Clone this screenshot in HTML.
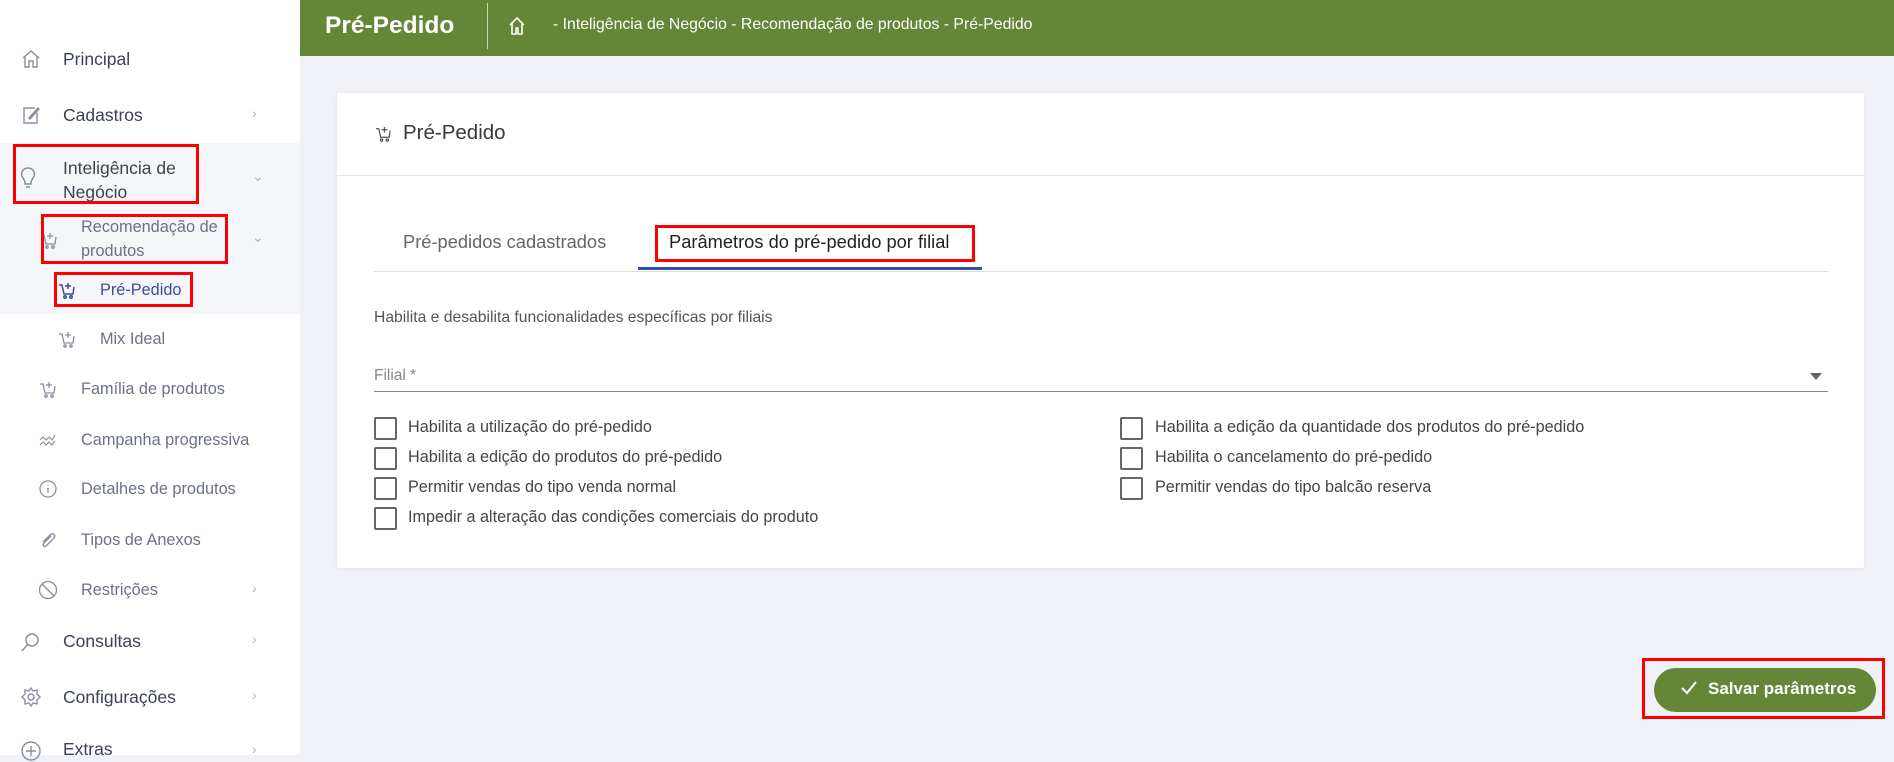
<!DOCTYPE html>
<html><head><meta charset="utf-8"><style>
*{box-sizing:border-box;margin:0;padding:0}
body{width:1894px;height:755px;overflow:hidden;background:#f0f1f6;font-family:"Liberation Sans",sans-serif;position:relative}
.abs{position:absolute}
.side{left:0;top:0;width:300px;height:755px;background:#fff}
.hl{left:0;top:143px;width:300px;height:171px;background:#f5f6f9}
.it{position:absolute;white-space:nowrap;color:#3c4155;font-size:17.5px;line-height:20px}
.sub{color:#6c7186;font-size:16.3px}
.chev{position:absolute;left:252px;color:#b0b2bd;font-size:14px}
.red{position:absolute;border:3px solid #f00}
.hdr{left:300px;top:0;width:1594px;height:56px;background:#648637}
.card{left:337px;top:93px;width:1527px;height:475px;background:#fff;box-shadow:0 1px 4px rgba(0,0,0,.06)}
.cb{position:absolute;width:23px;height:23px;border:2px solid #666;border-radius:2px}
.lbl{position:absolute;font-size:16.2px;color:#444;white-space:nowrap}
svg{position:absolute}
</style></head><body>
<div class="abs side"></div>
<div class="abs hl"></div>
<svg style="left:20px;top:48px" width="22" height="22" viewBox="0 0 22 22" fill="none" stroke="#8a8d9d" stroke-width="1.4"><path d="M3 10 L11 3 L19 10 M5 8 V19 H9 V13 H13 V19 H17 V8"/></svg>
<div class="it" style="left:63px;top:49px">Principal</div>
<svg style="left:20px;top:104px" width="22" height="22" viewBox="0 0 22 22" fill="none" stroke="#8a8d9d" stroke-width="1.4"><path d="M15 4 H4 V19 H17 V9 M9 14 L18 4 L19 5 L10 15 Z"/></svg>
<div class="it" style="left:63px;top:105px">Cadastros</div><div class="chev" style="top:105px">›</div>
<svg style="left:18px;top:166px" width="20" height="26" viewBox="0 0 20 26" fill="none" stroke="#8a8d9d" stroke-width="1.5"><path d="M10 2 C4 2 2 8 5 12 C7 15 7 16 7 18 H13 C13 16 13 15 15 12 C18 8 16 2 10 2Z M8 21 H12"/></svg>
<div class="it" style="left:63px;top:156px;line-height:24px">Inteligência de<br>Negócio</div><div class="chev" style="top:168px">⌄</div>
<div class="red" style="left:13px;top:144px;width:186px;height:60px"></div>
<svg style="left:40px;top:231px" width="18" height="18" viewBox="0 0 18 18" fill="none" stroke="#8a8d9d" stroke-width="1.3"><path d="M1 4 H4 L6 13 H15 L16 6 M10 2 V8 M7 5 H13"/><circle cx="7" cy="16" r="1.2"/><circle cx="13" cy="16" r="1.2"/></svg>
<div class="it sub" style="left:81px;top:215px;line-height:24px">Recomendação de<br>produtos</div><div class="chev" style="top:229px">⌄</div>
<div class="red" style="left:41px;top:214px;width:187px;height:50px"></div>
<svg style="left:58px;top:281px" width="18" height="18" viewBox="0 0 18 18" fill="none" stroke="#3b4f9a" stroke-width="1.5"><path d="M1 4 H4 L6 13 H15 L16 6 M10 2 V8 M7 5 H13"/><circle cx="7" cy="16" r="1.2"/><circle cx="13" cy="16" r="1.2"/></svg>
<div class="it sub" style="left:100px;top:280px;color:#3b4f9a">Pré-Pedido</div>
<div class="red" style="left:54px;top:272px;width:139px;height:35px"></div>
<svg style="left:58px;top:330px" width="18" height="18" viewBox="0 0 18 18" fill="none" stroke="#8a8d9d" stroke-width="1.3"><path d="M1 4 H4 L6 13 H15 L16 6 M10 2 V8 M7 5 H13"/><circle cx="7" cy="16" r="1.2"/><circle cx="13" cy="16" r="1.2"/></svg>
<div class="it sub" style="left:100px;top:329px">Mix Ideal</div>
<svg style="left:39px;top:380px" width="18" height="18" viewBox="0 0 18 18" fill="none" stroke="#8a8d9d" stroke-width="1.3"><path d="M1 4 H4 L6 13 H15 L16 6 M10 2 V8 M7 5 H13"/><circle cx="7" cy="16" r="1.2"/><circle cx="13" cy="16" r="1.2"/></svg>
<div class="it sub" style="left:81px;top:379px">Família de produtos</div>
<svg style="left:39px;top:431px" width="18" height="18" viewBox="0 0 18 18" fill="none" stroke="#8a8d9d" stroke-width="1.2"><path d="M1 9 L4 6 L7 9 L10 6 L13 9 L16 4 M1 14 L4 11 L7 14 L10 11 L13 14 L16 10"/></svg>
<div class="it sub" style="left:81px;top:430px">Campanha progressiva</div>
<svg style="left:39px;top:480px" width="18" height="18" viewBox="0 0 18 18" fill="none" stroke="#8a8d9d" stroke-width="1.3"><circle cx="9" cy="9" r="8"/><path d="M9 8 V13 M9 5 V6"/></svg>
<div class="it sub" style="left:81px;top:479px">Detalhes de produtos</div>
<svg style="left:39px;top:531px" width="18" height="18" viewBox="0 0 18 18" fill="none" stroke="#8a8d9d" stroke-width="1.3"><path d="M12 5 L5 12 C3 14 5 17 7 15 L15 7 C17 4 14 1 11 4 L4 11"/></svg>
<div class="it sub" style="left:81px;top:530px">Tipos de Anexos</div>
<svg style="left:38px;top:580px" width="20" height="20" viewBox="0 0 20 20" fill="none" stroke="#8a8d9d" stroke-width="1.3"><circle cx="10" cy="10" r="8.5"/><path d="M4 4 L16 16"/></svg>
<div class="it sub" style="left:81px;top:580px">Restrições</div><div class="chev" style="top:580px">›</div>
<svg style="left:20px;top:631px" width="22" height="22" viewBox="0 0 22 22" fill="none" stroke="#8a8d9d" stroke-width="1.4"><circle cx="12" cy="9" r="6"/><path d="M8 13 L2 20"/></svg>
<div class="it" style="left:63px;top:631px">Consultas</div><div class="chev" style="top:631px">›</div>
<svg style="left:20px;top:686px" width="22" height="22" viewBox="0 0 22 22" fill="none" stroke="#8a8d9d" stroke-width="1.4"><circle cx="11" cy="11" r="3"/><path d="M11 2 L13 5 L17 4 L17 8 L20 11 L17 14 L17 18 L13 17 L11 20 L9 17 L5 18 L5 14 L2 11 L5 8 L5 4 L9 5 Z"/></svg>
<div class="it" style="left:63px;top:687px">Configurações</div><div class="chev" style="top:687px">›</div>
<svg style="left:20px;top:740px" width="22" height="22" viewBox="0 0 22 22" fill="none" stroke="#8a8d9d" stroke-width="1.4"><circle cx="11" cy="11" r="9"/><path d="M11 6 V16 M6 11 H16"/></svg>
<div class="it" style="left:63px;top:739px">Extras</div><div class="chev" style="top:741px">›</div>

<div class="abs hdr"></div>
<div class="abs" style="left:325px;top:12px;color:#fff;font-size:24.5px;font-weight:bold">Pré-Pedido</div>
<div class="abs" style="left:487px;top:3px;width:1px;height:46px;background:#c8d5b5"></div>
<svg style="left:508px;top:16px" width="18" height="20" viewBox="0 0 18 20" fill="none" stroke="#fff" stroke-width="1.6"><path d="M2 9 L9 2 L16 9 M4 7 V18 H8 V12 H10 V18 H14 V7"/></svg>
<div class="abs" style="left:553px;top:16px;color:#fff;font-size:15.8px">- Inteligência de Negócio - Recomendação de produtos - Pré-Pedido</div>

<div class="abs card"></div>
<svg style="left:375px;top:125px" width="17" height="17" viewBox="0 0 18 18" fill="none" stroke="#555" stroke-width="1.3"><path d="M1 4 H4 L6 13 H15 L16 6 M10 2 V8 M7 5 H13"/><circle cx="7" cy="16" r="1.2"/><circle cx="13" cy="16" r="1.2"/></svg>
<div class="abs" style="left:403px;top:121px;font-size:20.5px;color:#3a3a3a">Pré-Pedido</div>
<div class="abs" style="left:337px;top:175px;width:1527px;height:1px;background:#e6e6e6"></div>
<div class="abs" style="left:403px;top:231px;font-size:18.3px;color:#666">Pré-pedidos cadastrados</div>
<div class="abs" style="left:669px;top:231px;font-size:18.3px;color:#222">Parâmetros do pré-pedido por filial</div>
<div class="red" style="left:655px;top:225px;width:320px;height:37px"></div>
<div class="abs" style="left:374px;top:271px;width:1454px;height:1px;background:#ddd"></div>
<div class="abs" style="left:638px;top:267px;width:344px;height:3px;background:#3251a3"></div>
<div class="abs" style="left:374px;top:309px;font-size:15.7px;color:#555">Habilita e desabilita funcionalidades específicas por filiais</div>
<div class="abs" style="left:374px;top:367px;font-size:15.5px;color:#888">Filial *</div>
<div class="abs" style="left:374px;top:391px;width:1454px;height:1px;background:#888"></div>
<div class="abs" style="left:1810px;top:373px;width:0;height:0;border-left:6px solid transparent;border-right:6px solid transparent;border-top:7px solid #666"></div>

<div class="cb" style="left:374px;top:417px"></div><div class="lbl" style="left:408px;top:418px">Habilita a utilização do pré-pedido</div>
<div class="cb" style="left:374px;top:447px"></div><div class="lbl" style="left:408px;top:448px">Habilita a edição do produtos do pré-pedido</div>
<div class="cb" style="left:374px;top:477px"></div><div class="lbl" style="left:408px;top:478px">Permitir vendas do tipo venda normal</div>
<div class="cb" style="left:374px;top:507px"></div><div class="lbl" style="left:408px;top:508px">Impedir a alteração das condições comerciais do produto</div>
<div class="cb" style="left:1120px;top:417px"></div><div class="lbl" style="left:1155px;top:418px">Habilita a edição da quantidade dos produtos do pré-pedido</div>
<div class="cb" style="left:1120px;top:447px"></div><div class="lbl" style="left:1155px;top:448px">Habilita o cancelamento do pré-pedido</div>
<div class="cb" style="left:1120px;top:477px"></div><div class="lbl" style="left:1155px;top:478px">Permitir vendas do tipo balcão reserva</div>

<div class="abs" style="left:1654px;top:668px;width:222px;height:44px;border-radius:22px;background:#648637"></div>
<svg style="left:1680px;top:680px" width="18" height="16" viewBox="0 0 18 16" fill="none" stroke="#fff" stroke-width="2"><path d="M2 8 L7 13 L16 2"/></svg>
<div class="abs" style="left:1708px;top:679px;color:#fff;font-weight:bold;font-size:17px">Salvar parâmetros</div>
<div class="red" style="left:1642px;top:658px;width:243px;height:61px"></div>
</body></html>
